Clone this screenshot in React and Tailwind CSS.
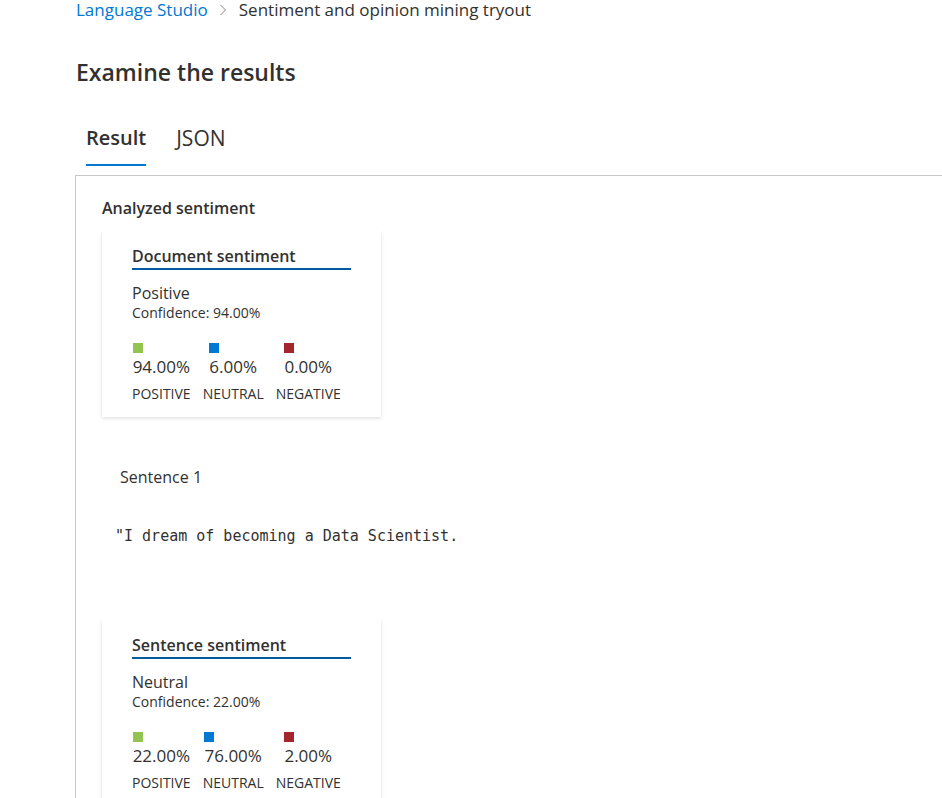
const font = { fontFamily: '"Open Sans", "Noto Sans", sans-serif' };

function Bar({ color, pct, label }) {
  return (
    <div className="flex flex-col items-center">
      <div className="flex flex-col items-start">
        <div className={`w-[10px] h-[10px] ${color}`} />
        <div className="text-[17px] leading-[24px] text-[#323130] mt-[2px]">{pct}</div>
      </div>
      <div className="text-[14px] leading-[18px] text-[#323130] mt-[6px]">{label}</div>
    </div>
  );
}

function SentimentCard({ title, label, confidence, values }) {
  return (
    <div className="w-[279px] bg-white shadow-[0_1.6px_3.6px_rgba(0,0,0,0.13),0_0.3px_0.9px_rgba(0,0,0,0.11)] px-[30px] pt-[15px] pb-[14px]">
      <div className="text-[16px] leading-[22px] font-semibold text-[#323130] border-b-2 border-[#005a9e] pb-[1px]">
        {title}
      </div>
      <div className="text-[16px] leading-[22px] text-[#323130] mt-[12px]">{label}</div>
      <div className="text-[14px] leading-[18px] text-[#323130]">Confidence: {confidence}</div>
      <div className="flex gap-[12px] mt-[21px]">
        <Bar color="bg-[#92c353]" pct={values[0]} label="POSITIVE" />
        <Bar color="bg-[#0078d4]" pct={values[1]} label="NEUTRAL" />
        <Bar color="bg-[#a4262c]" pct={values[2]} label="NEGATIVE" />
      </div>
    </div>
  );
}

export default function App() {
  return (
    <div className="min-h-screen bg-white overflow-hidden" style={font}>
      <div className="pl-[76px]">
        {/* breadcrumb */}
        <div className="flex items-center text-[17px] leading-[22px] pt-[1px] -mt-[2px]">
          <span className="text-[#0078d4]">Language Studio</span>
          <svg width="10" height="14" viewBox="0 0 10 14" className="ml-[10px] mr-[11px]">
            <path d="M2.5 2l5 5-5 5" fill="none" stroke="#8a8886" strokeWidth="1" />
          </svg>
          <span className="text-[#323130]">Sentiment and opinion mining tryout</span>
        </div>

        <h1 className="text-[23px] leading-[32px] font-semibold text-[#323130] mt-[35px]">
          Examine the results
        </h1>

        {/* tabs */}
        <div className="flex gap-[30px] mt-[36px] pl-[10px]">
          <div className="flex flex-col">
            <span className="text-[20px] leading-[28px] font-semibold text-[#323130]">Result</span>
            <span className="h-[2px] bg-[#0078d4] mt-[12px]" />
          </div>
          <span className="text-[21px] leading-[28px] text-[#323130]">JSON</span>
        </div>
      </div>

      {/* panel */}
      <div className="ml-[75px] mt-[9px] border-t border-l border-[#c8c8c8] pl-[26px] pt-[21px] pb-[40px]">
        <div className="text-[16px] leading-[22px] font-semibold text-[#323130]">Analyzed sentiment</div>
        <div className="mt-[11px]">
          <SentimentCard
            title="Document sentiment"
            label="Positive"
            confidence="94.00%"
            values={["94.00%", "6.00%", "0.00%"]}
          />
        </div>

        <div className="text-[16px] leading-[22px] text-[#323130] mt-[49px] pl-[18px]">Sentence 1</div>
        <div
          className="text-[15px] leading-[20px] text-[#323130] mt-[38px] pl-[13px]"
          style={{ fontFamily: '"DejaVu Sans Mono", "Liberation Mono", monospace' }}
        >
          "I dream of becoming a Data Scientist.
        </div>

        <div className="mt-[73px]">
          <SentimentCard
            title="Sentence sentiment"
            label="Neutral"
            confidence="22.00%"
            values={["22.00%", "76.00%", "2.00%"]}
          />
        </div>
      </div>
    </div>
  );
}
